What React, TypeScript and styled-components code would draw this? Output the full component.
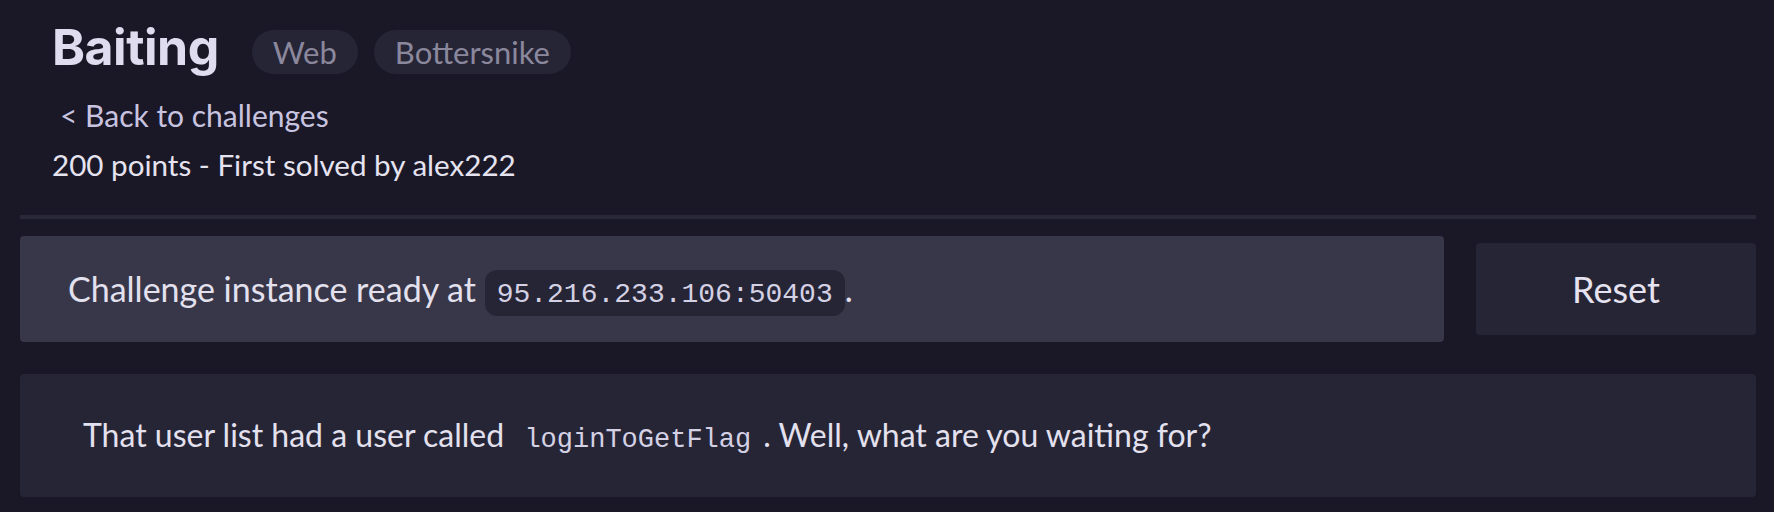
import { FC } from 'react';
import styled, { createGlobalStyle } from 'styled-components';

const GlobalStyle = createGlobalStyle`
	html,
	body {
		margin: 0;
		padding: 0;
		background: #1a1827;
	}

	body {
		font-family: 'Lato', 'Noto Sans', sans-serif;
		color: #e4e1ef;
	}

	* {
		box-sizing: border-box;
	}
`;

const Page = styled.div`
	padding: 22px 18px 0 20px;
`;

const Header = styled.header`
	padding: 0 32px 32px;
	border-bottom: 4px solid #2a2939;
`;

const TitleRow = styled.div`
	display: flex;
	align-items: flex-start;
	gap: 33px;
`;

const Title = styled.h1`
	margin: 0;
	font-family: 'Inter', 'Noto Sans', sans-serif;
	font-size: 50px;
	line-height: 50px;
	font-weight: 700;
	letter-spacing: -0.5px;
	color: #e0dcef;
`;

const Tags = styled.div`
	display: flex;
	gap: 16px;
	margin-top: 8px;
`;

const Tag = styled.span`
	padding: 4px 21px;
	border-radius: 999px;
	background: #262536;
	color: #8b889d;
	font-size: 31px;
	line-height: 36px;
`;

const BackLink = styled.a`
	display: block;
	margin: 23px 0 14px 8px;
	color: #c8c4e0;
	font-size: 30px;
	line-height: 1.2;
	text-decoration: none;
	cursor: pointer;
`;

const Meta = styled.p`
	margin: 0;
	font-size: 29.6px;
	line-height: 1.2;
	color: #e6e3f0;
`;

const InstanceRow = styled.div`
	display: flex;
	align-items: center;
	gap: 32px;
	margin-top: 17px;
`;

const Panel = styled.div<{ $tone: 'light' | 'dark' }>`
	border-radius: 4px;
	background: ${({ $tone }) => ($tone === 'light' ? '#383749' : '#262536')};
`;

const InstancePanel = styled(Panel)`
	flex: 1;
	padding: 32px 48px;
	font-size: 34px;
	line-height: 42px;
`;

const Code = styled.code<{ $size: number }>`
	padding: 9px 12px 6px;
	border-radius: 12px;
	background: #262536;
	font-family: 'Liberation Mono', 'DejaVu Sans Mono', monospace;
	font-size: ${({ $size }) => $size}px;
	line-height: 1;
	color: #d4d1e4;
`;

const ResetButton = styled.button`
	width: 280px;
	height: 92px;
	border: none;
	border-radius: 4px;
	background: #262536;
	color: #e6e3f0;
	font-family: 'Lato', sans-serif;
	font-size: 36px;
	cursor: pointer;
`;

const HintPanel = styled(Panel)`
	margin-top: 32px;
	padding: 42px 63px 43px;
	font-size: 32px;
	line-height: 1.2;
`;

const App: FC = () => {
	return (
		<>
			<GlobalStyle />
			<Page>
				<Header>
					<TitleRow>
						<Title>Baiting</Title>
						<Tags>
							<Tag>Web</Tag>
							<Tag>Bottersnike</Tag>
						</Tags>
					</TitleRow>
					<BackLink>&lt; Back to challenges</BackLink>
					<Meta>200 points - First solved by alex222</Meta>
				</Header>

				<InstanceRow>
					<InstancePanel $tone="light">
						Challenge instance ready at <Code $size={28}>95.216.233.106:50403</Code>.
					</InstancePanel>
					<ResetButton>Reset</ResetButton>
				</InstanceRow>

				<HintPanel $tone="dark">
					That user list had a user called <Code $size={27}>loginToGetFlag</Code>. Well, what
					are you waiting for?
				</HintPanel>
			</Page>
		</>
	);
};

export default App;
